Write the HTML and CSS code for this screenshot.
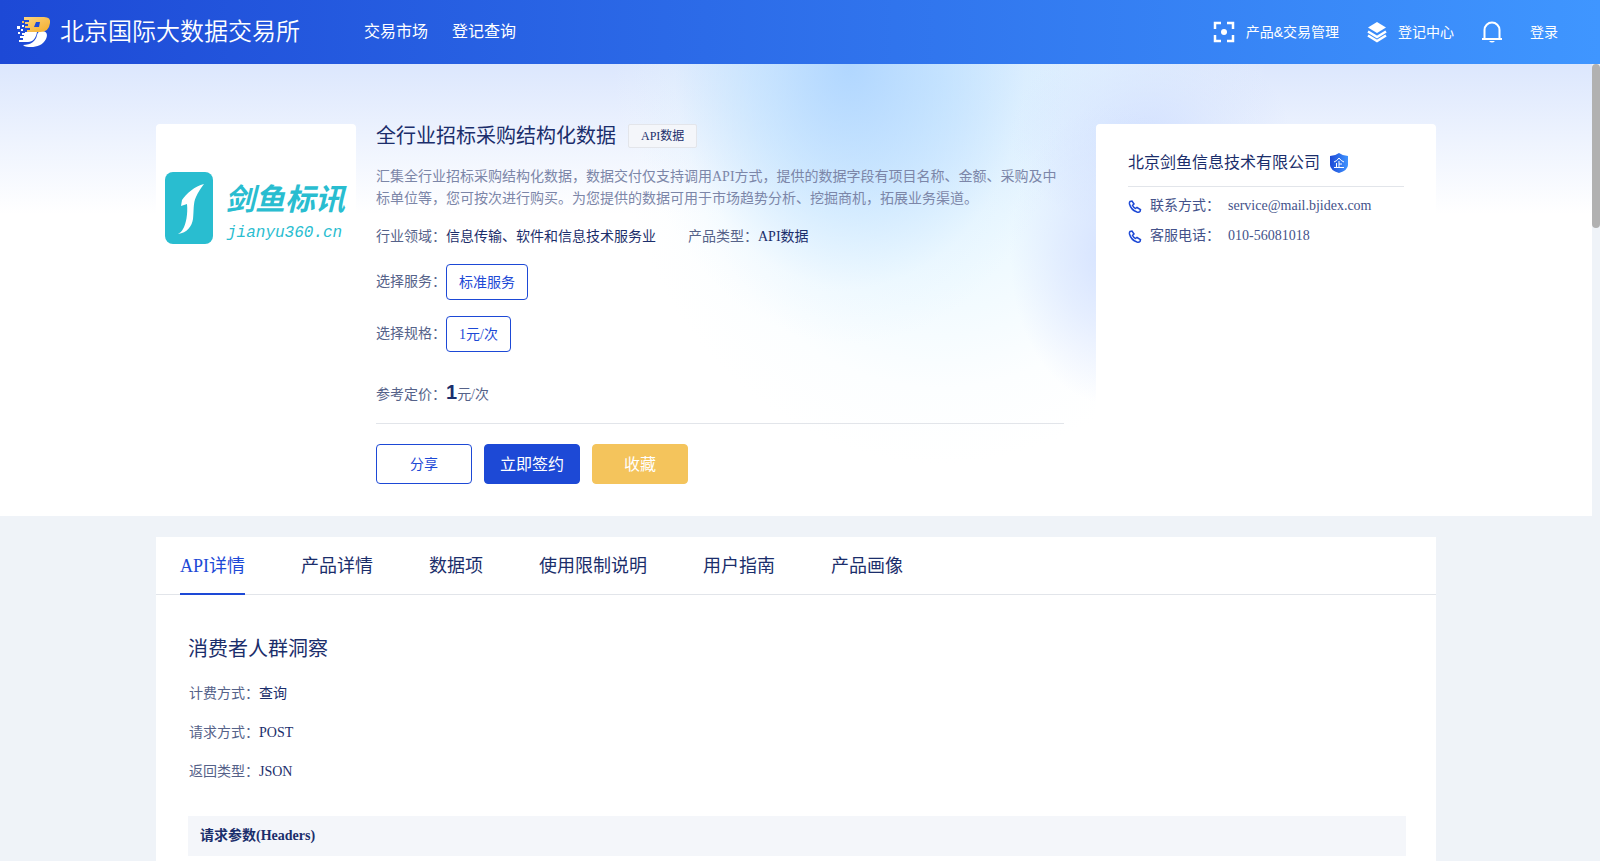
FILE: index.html
```html
<!DOCTYPE html>
<html lang="zh-CN">

<head>
    <meta charset="UTF-8">
    <meta name="viewport" content="width=device-width, initial-scale=1.0">
    <title>全行业招标采购结构化数据 - 北京国际大数据交易所</title>
    <link rel="stylesheet" href="styles.css">
</head>

<body>
    <header class="header">
        <a class="brand" href="#">
            <svg class="brand-icon" width="36" height="32" viewBox="0 0 36 32">
                <defs>
                    <linearGradient id="gold" x1="0" y1="0" x2="1" y2="1">
                        <stop offset="0" stop-color="#fbd480" />
                        <stop offset="1" stop-color="#f3ad2b" />
                    </linearGradient>
                </defs>
                <path fill="#fff" d="M26 15c5 0 6 4 4 8-3 6-9 8-15 8-3 0-6 0-8-2 8 0 13-4 14-10 1-3 2-4 5-4z" />
                <path fill="#fff" d="M9 16h12c-1 6-4 10-9 10H3v-2h4v-2H4v-2h4v-1H6v-2h3z" />
                <path fill="url(#gold)" fill-rule="evenodd" d="M8 1h20q7 0 6 6-1 9-10 9H11v-2h3v-2H9v-2h3V8H9V6h4V4H8zM20 6l-2 5h5l1-5z" />
                <path fill="#fff" d="M1 10h3v3H1zM5 13h2v2H5zM2 16h2v2H2zM6 9h2v2H6z" />
                <path fill="#f6bd4b" d="M6 5h2v2H6z" />
            </svg>
            <span class="brand-name">北京国际大数据交易所</span>
        </a>
        <nav class="nav">
            <a href="#">交易市场</a>
            <a href="#">登记查询</a>
        </nav>
        <div class="header-tools">
            <a class="tool" href="#">
                <svg width="22" height="22" viewBox="0 0 22 22" fill="none" stroke="#fff" stroke-width="2.500">
                    <path d="M2 8V2h6M14 2h6v6M20 14v6h-6M8 20H2v-6" />
                    <circle cx="11" cy="11" r="3" fill="#fff" stroke="none" />
                </svg>
                <span>产品&amp;交易管理</span>
            </a>
            <a class="tool" href="#">
                <svg width="20" height="22" viewBox="0 0 20 22">
                    <path fill="#fff" d="M10 1l9 5.500-9 5.500-9-5.500z" />
                    <path fill="none" stroke="#fff" stroke-width="2.500" d="M1 10.500l9 5.500 9-5.500M1 14.500l9 5.500 9-5.500" />
                </svg>
                <span>登记中心</span>
            </a>
            <a class="bell" href="#" aria-label="消息">
                <svg width="20" height="24" viewBox="0 0 20 24">
                    <path fill="none" stroke="#fff" stroke-width="2" d="M2.500 18.500V10a7.500 7.500 0 0 1 15 0v8.500M0 19h20" />
                    <path fill="#fff" d="M7 21h6q-3 3-6 0z" />
                </svg>
            </a>
            <a class="login" href="#">登录</a>
        </div>
    </header>

    <div class="page">
        <main class="main">
            <section class="hero">
                <div class="container hero-inner">
                    <div class="cover">
                        <svg width="184" height="76" viewBox="0 0 184 76">
                            <rect x="1" y="2" width="48" height="72" rx="8" fill="#29bdd0" />
                            <path fill="#fff" d="M40 14C31 16 22 24 18 30l-1 6 6-2c1 10-1 20-4 25-1 2-3 4-5 5 9-1 14-8 15-15 1-8 0-16 3-22 2-5 5-9 8-13z" />
                            <text class="cover-name" x="61" y="40">剑鱼标讯</text>
                            <text class="cover-site" x="63" y="67">jianyu360.cn</text>
                        </svg>
                    </div>

                    <div class="info">
                        <div class="title-row">
                            <h1>全行业招标采购结构化数据</h1>
                            <span class="tag">API数据</span>
                        </div>
                        <p class="desc">汇集全行业招标采购结构化数据，数据交付仅支持调用API方式，提供的数据字段有项目名称、金额、采购及中标单位等，您可按次进行购买。为您提供的数据可用于市场趋势分析、挖掘商机，拓展业务渠道。</p>
                        <div class="meta">
                            <div>行业领域：<b>信息传输、软件和信息技术服务业</b></div>
                            <div>产品类型：<b>API数据</b></div>
                        </div>
                        <div class="option">
                            <span>选择服务：</span>
                            <button type="button" class="option-btn">标准服务</button>
                        </div>
                        <div class="option">
                            <span>选择规格：</span>
                            <button type="button" class="option-btn">1元/次</button>
                        </div>
                        <div class="price">
                            <span>参考定价：</span><strong>1</strong><span>元/次</span>
                        </div>
                        <div class="actions">
                            <button type="button" class="btn btn-share">分享</button>
                            <button type="button" class="btn btn-sign">立即签约</button>
                            <button type="button" class="btn btn-collect">收藏</button>
                        </div>
                    </div>

                    <aside class="company">
                        <div class="company-name">
                            <h2>北京剑鱼信息技术有限公司</h2>
                            <svg width="20" height="20" viewBox="0 0 20 20">
                                <defs>
                                    <linearGradient id="shield">
                                        <stop offset="0" stop-color="#1d49d6" />
                                        <stop offset="1" stop-color="#3f94ff" />
                                    </linearGradient>
                                </defs>
                                <path fill="url(#shield)" d="M10 0q4 3 9 3v9q0 5-9 8-9-3-9-8V3q5 0 9-3z" />
                                <path fill="none" stroke="#fff" d="M5 9q3-1 5-4 2 3 5 4M10 8v6M7.500 10v4M10 11h3M5 14.500h10" />
                            </svg>
                        </div>
                        <div class="contact">
                            <svg width="14" height="14" viewBox="0 0 14 14">
                                <path d="M2 2.500l2-.5 2 3-1.500 1.500q1 2 3 3L9 8.500l3.500 2-.5 2q-1 1-3 .5Q3 11 1.500 5q-.3-1.500.5-2.500z" />
                            </svg>
                            <span>联系方式：</span>
                            <span>service@mail.bjidex.com</span>
                        </div>
                        <div class="contact">
                            <svg width="14" height="14" viewBox="0 0 14 14">
                                <path d="M2 2.500l2-.5 2 3-1.500 1.500q1 2 3 3L9 8.500l3.500 2-.5 2q-1 1-3 .5Q3 11 1.500 5q-.3-1.500.5-2.500z" />
                            </svg>
                            <span>客服电话：</span>
                            <span>010-56081018</span>
                        </div>
                    </aside>
                </div>
            </section>

            <section class="container detail">
                <nav class="tabs">
                    <a class="active" href="#">API详情</a>
                    <a href="#">产品详情</a>
                    <a href="#">数据项</a>
                    <a href="#">使用限制说明</a>
                    <a href="#">用户指南</a>
                    <a href="#">产品画像</a>
                </nav>
                <div class="detail-body">
                    <h2>消费者人群洞察</h2>
                    <dl class="props">
                        <dt>计费方式：</dt>
                        <dd>查询</dd>
                        <dt>请求方式：</dt>
                        <dd>POST</dd>
                        <dt>返回类型：</dt>
                        <dd>JSON</dd>
                    </dl>
                    <h3>请求参数(Headers)</h3>
                </div>
            </section>
        </main>
        <div class="scrollbar">
            <div class="scrollbar-thumb"></div>
        </div>
    </div>
</body>

</html>
```

FILE: styles.css
```css
* {
    box-sizing: border-box;
}

body {
    margin: 0;
    height: 100vh;
    display: flex;
    flex-direction: column;
    overflow: hidden;
    font-family: "Liberation Serif", "Noto Sans CJK SC", serif;
    font-size: 14px;
    line-height: 22px;
    color: #556289;
    background-color: #eff3f8;
}

a {
    color: inherit;
    text-decoration: none;
}

h1,
h2,
h3,
p,
dl,
dd {
    margin: 0;
}

button {
    font-family: inherit;
    cursor: pointer;
}

svg {
    display: block;
    flex-shrink: 0;
}

/* header */
.header {
    display: flex;
    align-items: center;
    flex-shrink: 0;
    height: 64px;
    padding: 0 42px 0 16px;
    color: #fff;
    font-family: "Liberation Sans", "Noto Sans CJK SC", sans-serif;
    background: linear-gradient(90deg, #1d49d6, #3f96ff);
}

.brand {
    display: flex;
    align-items: center;
    gap: 8px;
}

.brand-name {
    font-size: 24px;
    font-weight: 350;
    line-height: 32px;
}

.nav {
    display: flex;
    gap: 24px;
    margin-left: 64px;
    font-size: 16px;
}

.header-tools {
    display: flex;
    align-items: center;
    gap: 28px;
    margin-left: auto;
}

.tool {
    display: flex;
    align-items: center;
    gap: 11px;
}

/* scroll area */
.page {
    display: flex;
    flex: 1;
    min-height: 0;
}

.main {
    flex: 1;
    min-width: 0;
    overflow: hidden;
}

.scrollbar {
    width: 8px;
}

.scrollbar-thumb {
    height: 164px;
    border-radius: 4px;
    background-color: #b1b1b1;
}

.container {
    max-width: 1280px;
    margin: 0 auto;
}

/* product info */
.hero {
    padding: 60px 0 32px;
    background:
        radial-gradient(ellipse 100px 150px at 1110px 190px, rgba(205, 220, 255, 0.8), rgba(210, 224, 255, 0.5) 50%, rgba(215, 228, 255, 0)),
        radial-gradient(ellipse 140px 100px at 1150px 70px, rgba(208, 222, 255, 0.8), rgba(208, 222, 255, 0.4) 50%, rgba(208, 222, 255, 0)),
        radial-gradient(ellipse 220px 280px at 850px 0, rgba(172, 212, 255, 0.9), rgba(184, 220, 255, 0.55) 45%, rgba(214, 236, 255, 0.15) 80%, rgba(220, 240, 255, 0)),
        radial-gradient(ellipse 330px 380px at 940px 20px, rgba(212, 236, 255, 0.9), rgba(228, 246, 255, 0.6) 50%, rgba(240, 250, 255, 0.2) 80%, rgba(244, 252, 255, 0)),
        linear-gradient(180deg, #dce7fd, #fff 150px);
}

.hero-inner {
    display: flex;
}

.cover {
    display: flex;
    align-items: center;
    justify-content: center;
    width: 200px;
    height: 168px;
    margin-right: 20px;
    border-radius: 4px;
    background-color: #fff;
}

.cover-name {
    font-family: "Noto Sans CJK SC", sans-serif;
    font-size: 30px;
    font-weight: 700;
    font-style: italic;
    fill: #29bdd0;
}

.cover-site {
    font-family: "Liberation Mono", monospace;
    font-size: 16px;
    font-style: italic;
    fill: #29bdd0;
}

.info {
    flex: 1;
    min-width: 0;
}

.title-row {
    display: flex;
    align-items: center;
    gap: 12px;
    height: 24px;
}

.title-row h1 {
    font-size: 20px;
    font-weight: 400;
    color: #1b2e6b;
}

.tag {
    padding: 0 12px;
    border: 1px solid #e3e5ea;
    border-radius: 2px;
    font-size: 12px;
    color: #1b2e6b;
    background-color: #f4f6fa;
}

.desc {
    margin-top: 18px;
    color: #7c86a8;
}

.meta {
    display: flex;
    gap: 32px;
    margin-top: 16px;
}

.meta b {
    font-weight: 400;
    color: #1b2e6b;
}

.option {
    display: flex;
    align-items: center;
    margin-top: 16px;
}

.option-btn {
    height: 36px;
    padding: 0 12px 2px;
    border: 1px solid #1d49d6;
    border-radius: 4px;
    font-size: 14px;
    color: #1d49d6;
    background-color: #fff;
}

.price {
    display: flex;
    align-items: baseline;
    margin-top: 29px;
    padding-bottom: 17px;
    border-bottom: 1px solid #e2e5ea;
}

.price strong {
    font-family: "Liberation Sans Narrow", "Liberation Sans", sans-serif;
    font-size: 20px;
    color: #1b2e6b;
}

.actions {
    display: flex;
    gap: 12px;
    margin-top: 20px;
}

.btn {
    width: 96px;
    height: 40px;
    padding: 0 0 2px;
    border: 1px solid #1d49d6;
    border-radius: 4px;
    font-size: 16px;
    color: #fff;
}

.btn-share {
    font-size: 14px;
    color: #1d49d6;
    background-color: #fff;
}

.btn-sign {
    background-color: #1d49d6;
}

.btn-collect {
    border-color: #f4c45c;
    background-color: #f4c45c;
}

/* company card */
.company {
    width: 340px;
    margin-left: 32px;
    padding: 24px 32px;
    border-radius: 4px;
    color: #44528a;
    background-color: #fff;
}

.company-name {
    display: flex;
    align-items: center;
    gap: 9px;
    padding: 4px 0 12px;
    margin-bottom: 8px;
    border-bottom: 1px solid #e2e5ea;
}

.company-name h2 {
    font-size: 16px;
    font-weight: 400;
    color: #1b2e6b;
}

.contact {
    display: flex;
    align-items: center;
    gap: 8px;
    margin-bottom: 8px;
}

.contact path {
    fill: none;
    stroke: #1d49d6;
    stroke-width: 1.5;
}

/* detail */
.detail {
    margin-top: 21px;
    min-height: 400px;
    background-color: #fff;
}

.tabs {
    display: flex;
    gap: 56px;
    height: 58px;
    padding: 0 24px;
    border-bottom: 1px solid #e2e5ea;
    font-size: 18px;
    line-height: 58px;
    color: #1b2e6b;
}

.tabs .active {
    height: 58px;
    border-bottom: 2px solid #1d49d6;
    color: #1d49d6;
}

.detail-body {
    padding: 40px 30px 30px 32px;
}

.detail-body h2 {
    font-size: 20px;
    font-weight: 400;
    line-height: 28px;
    color: #1b2e6b;
}

.props {
    display: grid;
    grid-template-columns: 70px 1fr;
    row-gap: 17px;
    margin-top: 20px;
    padding-left: 1px;
}

.props dd {
    color: #1b2e6b;
}

.detail-body h3 {
    margin-top: 33px;
    padding: 0 12px;
    font-size: 14px;
    line-height: 40px;
    color: #1b2e6b;
    background-color: #f4f6fa;
}
```
